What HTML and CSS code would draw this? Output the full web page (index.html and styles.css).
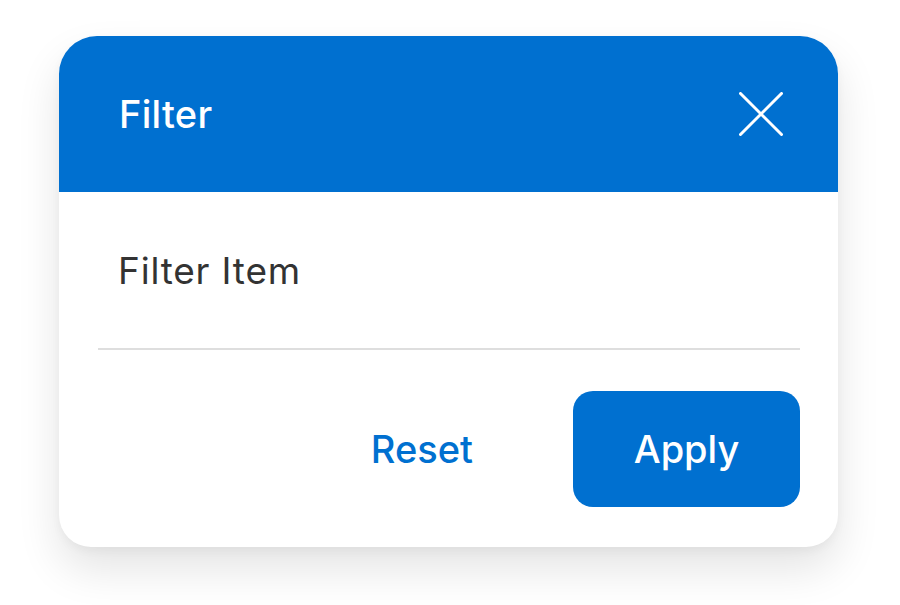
FILE: index.html
```html
<!DOCTYPE html>
<html lang="en">
<head>
<meta charset="utf-8">
<title>Filter</title>
<link rel="stylesheet" href="styles.css">
</head>
<body>
<div class="card">
  <div class="header">
    <span class="title">Filter</span>
    <button class="close" aria-label="Close">
      <svg width="44" height="44" viewBox="0 0 44 44"><path d="M1.5 1.5 L42.5 42.5 M42.5 1.5 L1.5 42.5" stroke="#fff" stroke-width="3" stroke-linecap="round" fill="none"/></svg>
    </button>
  </div>
  <div class="item">Filter Item</div>
  <div class="divider"></div>
  <div class="footer">
    <button class="reset">Reset</button>
    <button class="apply">Apply</button>
  </div>
</div>
</body>
</html>
```
FILE: styles.css
```css
html, body {
  margin: 0;
  background: #ffffff;
  min-height: 605px;
}
body {
  padding: 36px 0 0 59px;
  box-sizing: border-box;
  font-family: Inter, "Noto Sans", sans-serif;
}
.card {
  width: 779px;
  height: 511px;
  background: #fff;
  border-radius: 38px 38px 32px 32px;
  overflow: hidden;
  box-shadow: 0 22px 44px rgba(0, 0, 0, 0.11), 0 4px 10px rgba(0, 0, 0, 0.04);
  display: flex;
  flex-direction: column;
}
.header {
  height: 156px;
  background: #0070d0;
  display: flex;
  align-items: center;
  justify-content: space-between;
  padding: 0 55px 0 60px;
  box-sizing: border-box;
}
.title {
  color: #fff;
  font-size: 38px;
  font-weight: 500;
  letter-spacing: 0.3px;
}
.close {
  background: none;
  border: 0;
  padding: 0;
  width: 44px;
  height: 44px;
  display: flex;
  cursor: pointer;
}
.item {
  height: 156px;
  display: flex;
  align-items: center;
  padding-left: 59px;
  font-size: 37px;
  letter-spacing: 0.8px;
  color: #333;
}
.divider {
  height: 2px;
  background: #dedede;
  margin: 0 38px 0 39px;
}
.footer {
  display: flex;
  justify-content: flex-end;
  align-items: center;
  padding: 41px 38px 0 0;
  gap: 100px;
}
.reset {
  background: none;
  border: 0;
  padding: 0;
  font-family: inherit;
  font-size: 38px;
  font-weight: 500;
  color: #0070d0;
}
.apply {
  width: 227px;
  height: 116px;
  background: #0070d0;
  border: 0;
  border-radius: 20px;
  color: #fff;
  font-family: inherit;
  font-size: 38px;
  font-weight: 500;
}
```
